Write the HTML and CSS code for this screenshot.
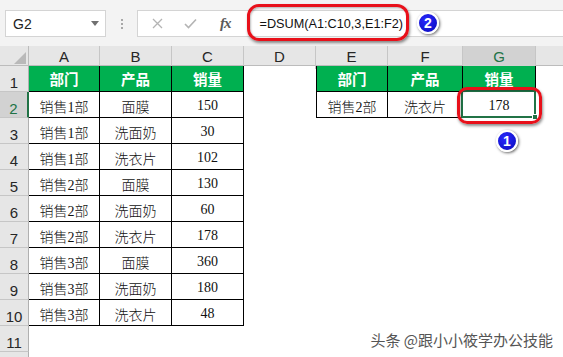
FILE: index.html
```html
<!DOCTYPE html>
<html lang="zh">
<head>
<meta charset="utf-8">
<link rel="stylesheet" href="styles.css">
</head>
<body>
<div class="bar">
  <div class="namebox"><span>G2</span><svg width="8" height="5" viewBox="0 0 8 5"><polygon points="0,0 8,0 4,5" fill="#707070"/></svg></div>
  <div class="grip"><i></i><i></i><i></i></div>
  <div class="fbox">
    <svg class="ic-x" width="11" height="11" viewBox="0 0 11 11"><path d="M1 1L10 10M10 1L1 10" stroke="#b4b4b4" stroke-width="1.3" fill="none"/></svg>
    <svg class="ic-ok" width="13" height="11" viewBox="0 0 13 11"><path d="M1 6L4.5 9.5L12 1.5" stroke="#b4b4b4" stroke-width="1.6" fill="none"/></svg>
    <span class="fx">fx</span>
    <span class="formula">=DSUM(A1:C10,3,E1:F2)</span>
  </div>
</div>
<div class="sheet">
  <div class="corner"><svg width="29" height="20" viewBox="0 0 29 20"><polygon points="14,18 26,18 26,6" fill="#b9b9b9"/></svg></div>
  <div class="cols">
    <div class="ch">A</div><div class="ch">B</div><div class="ch">C</div><div class="ch">D</div><div class="ch">E</div><div class="ch">F</div><div class="ch on">G</div><div class="ch last"></div>
  </div>
  <div class="rows">
    <div class="rh">1</div><div class="rh on">2</div><div class="rh">3</div><div class="rh">4</div><div class="rh">5</div><div class="rh">6</div><div class="rh">7</div><div class="rh">8</div><div class="rh">9</div><div class="rh">10</div><div class="rh">11</div><div class="rh"></div>
  </div>
  <div class="cells">
    <div class="tbl t1">
      <div class="c hd">部门</div><div class="c hd">产品</div><div class="c hd">销量</div>
      <div class="c">销售1部</div><div class="c">面膜</div><div class="c">150</div>
      <div class="c">销售1部</div><div class="c">洗面奶</div><div class="c">30</div>
      <div class="c">销售1部</div><div class="c">洗衣片</div><div class="c">102</div>
      <div class="c">销售2部</div><div class="c">面膜</div><div class="c">130</div>
      <div class="c">销售2部</div><div class="c">洗面奶</div><div class="c">60</div>
      <div class="c">销售2部</div><div class="c">洗衣片</div><div class="c">178</div>
      <div class="c">销售3部</div><div class="c">面膜</div><div class="c">360</div>
      <div class="c">销售3部</div><div class="c">洗面奶</div><div class="c">180</div>
      <div class="c">销售3部</div><div class="c">洗衣片</div><div class="c">48</div>
    </div>
    <div class="tbl t2">
      <div class="c hd">部门</div><div class="c hd">产品</div><div class="c hd">销量</div>
      <div class="c">销售2部</div><div class="c">洗衣片</div><div class="c">178</div>
    </div>
    <div class="sel"><span class="handle"></span></div>
  </div>
</div>
<div class="oval oval-f"></div>
<div class="badge badge-2">2</div>
<div class="oval oval-c"></div>
<div class="badge badge-1">1</div>
<div class="mark">头条 @跟小小筱学办公技能</div>
</body>
</html>
```
FILE: styles.css
```css
* { box-sizing: border-box; }
body {
  margin: 0;
  width: 563px;
  height: 357px;
  overflow: hidden;
  position: relative;
  background: #fff;
  font-family: "Liberation Sans", Arial, sans-serif;
  color: #000;
}
.bar {
  height: 46px;
  background: #f3f3f3;
  display: flex;
  align-items: flex-start;
  padding-top: 10px;
}
.namebox {
  margin-left: 5px;
  width: 101px;
  height: 27px;
  border: 1px solid #d4d4d4;
  background: #fff;
  display: flex;
  align-items: center;
  justify-content: space-between;
  padding: 0 6px 0 7px;
  font-size: 14px;
  color: #222;
}
.grip {
  margin-left: 15px;
  margin-top: 9px;
  width: 2px;
  display: flex;
  flex-direction: column;
  gap: 2px;
}
.grip i { display: block; width: 2px; height: 2px; background: #a8a8a8; }
.fbox {
  margin-left: 14px;
  flex: 1;
  height: 27px;
  border: 1px solid #d4d4d4;
  border-right: none;
  background: #fff;
  display: flex;
  align-items: center;
}
.ic-x { margin-left: 14px; }
.ic-ok { margin-left: 21px; }
.fx {
  margin-left: 23px;
  font-family: "Liberation Serif", serif;
  font-style: italic;
  font-weight: bold;
  font-size: 15px;
  color: #5a5a5a;
  letter-spacing: -1px;
}
.formula {
  margin-left: 29px;
  font-size: 12.7px;
  color: #111;
  white-space: nowrap;
}
.sheet {
  display: grid;
  grid-template-columns: 29px 1fr;
  grid-template-rows: 20px 1fr;
  height: 311px;
}
.corner {
  background: #e6e6e6;
  border-right: 1px solid #bcbcbc;
  border-bottom: 1px solid #bcbcbc;
}
.corner svg { display: block; }
.cols {
  display: grid;
  grid-template-columns: 71px 72px 72px 72px 72px 75px 73px 1fr;
  background: #e6e6e6;
  border-bottom: 1px solid #bcbcbc;
}
.ch {
  border-right: 1px solid #c6c6c6;
  text-align: center;
  font-size: 15px;
  line-height: 21px;
  color: #262626;
}
.ch.on { background: #d2d2d2; color: #217346; border-bottom: 2px solid #217346; }
.ch.last { border-right: none; }
.rows {
  display: flex;
  flex-direction: column;
  overflow: hidden;
}
.rh {
  flex: 0 0 26px;
  background: #e6e6e6;
  border-right: 1px solid #b0b0b0;
  border-bottom: 1px solid #c6c6c6;
  display: flex;
  align-items: flex-end;
  justify-content: center;
  font-size: 15px;
  line-height: 17px;
  color: #262626;
}
.rh.on { background: #d2d2d2; color: #217346; border-right: 2px solid #217346; }
.cells {
  display: grid;
  grid-template-columns: 71px 72px 72px 72px 72px 75px 73px 1fr;
  grid-template-rows: repeat(11, 26px);
  align-content: start;
}
.tbl { display: grid; }
.t1 {
  grid-area: 1 / 1 / 11 / 4;
  grid-template-columns: 71px 72px 72px;
  grid-template-rows: repeat(10, 26px);
}
.t2 {
  grid-area: 1 / 5 / 3 / 8;
  grid-template-columns: 72px 75px 73px;
  grid-template-rows: repeat(2, 26px);
}
.c {
  border-right: 1px solid #000;
  border-bottom: 1px solid #000;
  display: flex;
  align-items: center;
  justify-content: center;
  padding-top: 2px;
  font-family: "Liberation Serif", "Noto Sans CJK SC", serif;
  font-weight: 300;
  font-size: 14px;
  color: #111;
}
.t2 .c:nth-child(3n+1) { border-left: 1px solid #000; }
.c.hd {
  background: #00b050;
  color: #fff;
  font-weight: bold;
  font-family: "Noto Sans CJK SC", sans-serif;
  font-size: 14.5px;
  padding-top: 0;
}
.sel {
  grid-area: 2 / 7 / 3 / 8;
  margin: -2px 0 0 -2px;
  border: 2px solid #217346;
  position: relative;
  z-index: 2;
}
.handle {
  position: absolute;
  right: -4px;
  bottom: -4px;
  width: 6px;
  height: 6px;
  background: #217346;
  border: 1px solid #fff;
}
.oval {
  position: absolute;
  border: 3px solid #e8101a;
  box-shadow: 1px 2px 3px rgba(0,0,0,.45), inset 1px 1px 2px rgba(0,0,0,.25);
  z-index: 5;
}
.oval-f { left: 247px; top: 4px; width: 162px; height: 37px; border-radius: 12px; }
.oval-c { left: 457px; top: 87px; width: 85px; height: 37px; border-radius: 10px; }
.badge {
  position: absolute;
  width: 22px;
  height: 22px;
  border-radius: 50%;
  background: radial-gradient(circle at 40% 35%, #2a2aff, #0808b8);
  border: 2px solid #fff;
  box-shadow: 1px 1px 3px rgba(0,0,0,.6);
  color: #fff;
  font-weight: bold;
  font-size: 14px;
  line-height: 18px;
  text-align: center;
  z-index: 6;
}
.badge-2 { left: 417px; top: 12px; }
.badge-1 { left: 496px; top: 130px; }
.mark {
  position: absolute;
  right: 10px;
  top: 331px;
  font-family: "Noto Sans CJK SC", sans-serif;
  font-size: 15px;
  line-height: 18px;
  color: #555;
  text-shadow: 0 0 2px #fff, 1px 1px 1px #fff;
  white-space: nowrap;
}
```
